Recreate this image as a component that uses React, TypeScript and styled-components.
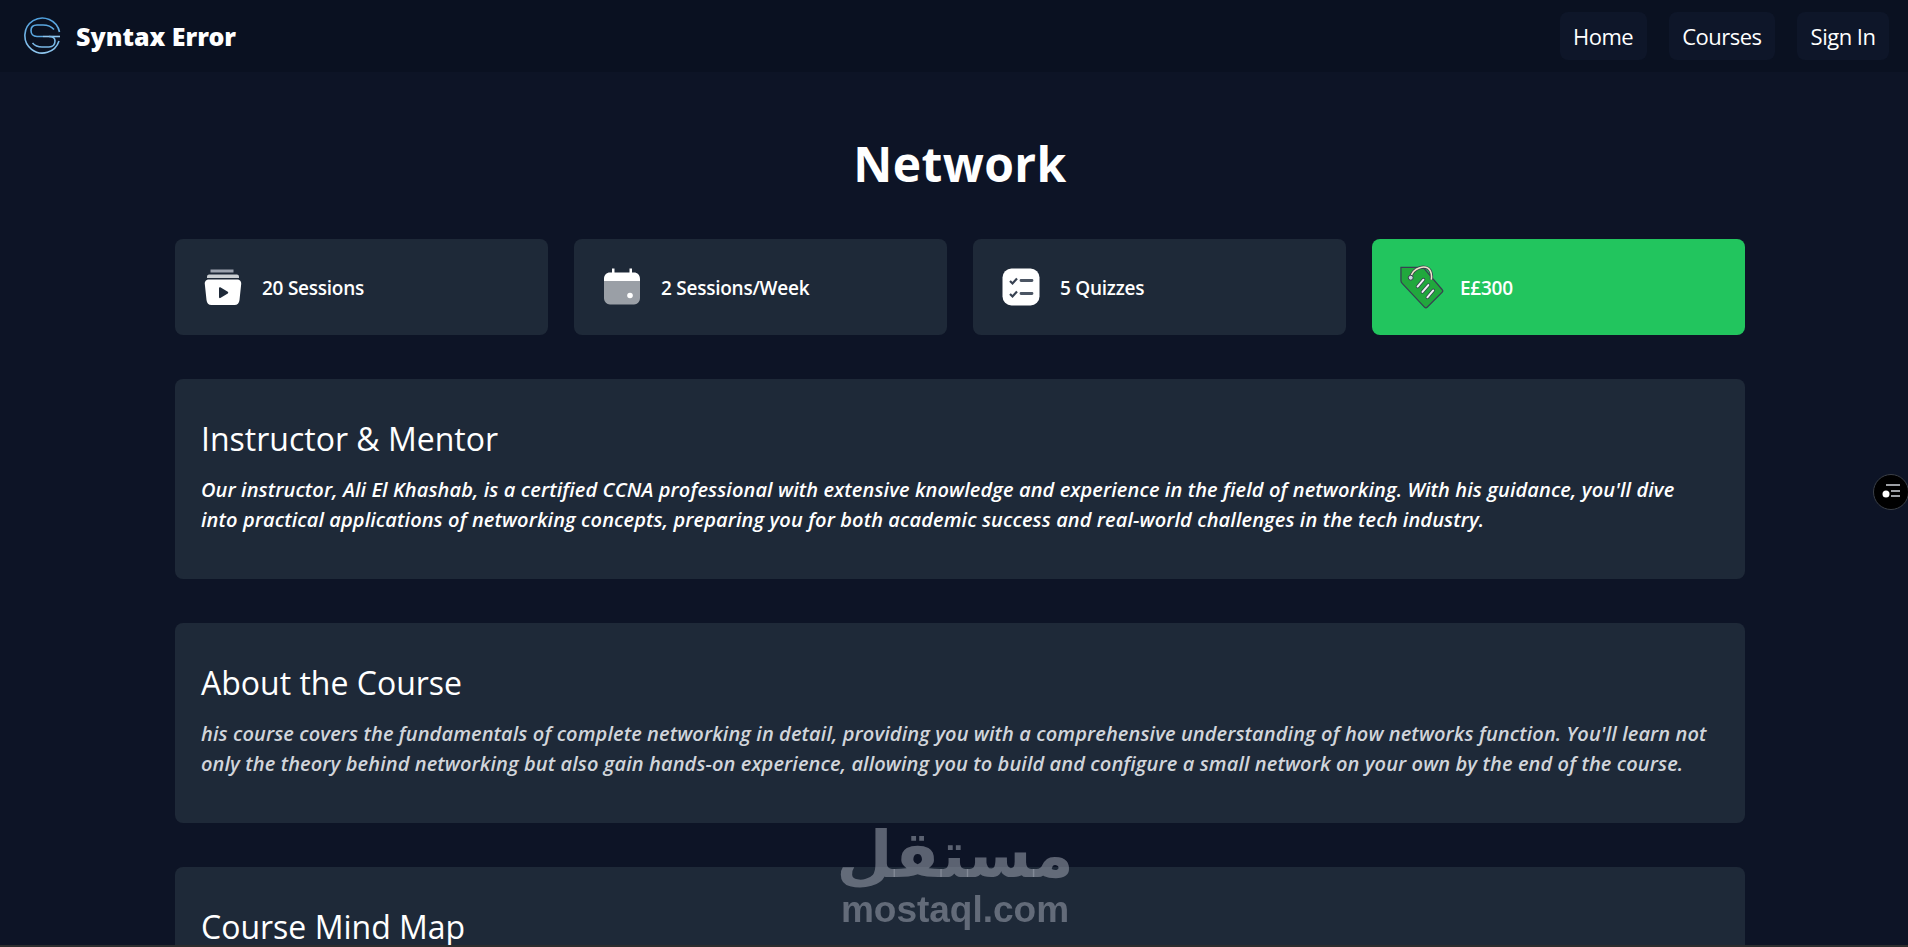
import React from 'react';
import styled, { createGlobalStyle } from 'styled-components';

const GlobalStyle = createGlobalStyle`
    html, body {
        margin: 0;
        height: 100%;
        overflow: hidden;
        background: #0d1426;
    }
    * { box-sizing: border-box; }
    body {
        font-family: "Open Sans", "Noto Sans", sans-serif;
        color: #fff;
    }
`;

const Navbar = styled.nav`
    height: 72px;
    padding: 0 19px 0 24px;
    display: flex;
    align-items: center;
    justify-content: space-between;
    background: #0a1121;
`;

const Brand = styled.div`
    display: flex;
    align-items: center;
    gap: 14px;
    font-size: 25px;
    font-weight: 900;
    font-family: "Noto Sans", sans-serif;
`;

const NavLinks = styled.div`
    display: flex;
    gap: 22px;
`;

const NavLink = styled.a`
    height: 48px;
    padding: 0 13.5px;
    display: flex;
    align-items: center;
    border-radius: 8px;
    background: #0e1629;
    font-size: 22px;
    font-weight: 500;
    letter-spacing: -0.5px;
`;

const Main = styled.main`
    margin: 0 163px 0 175px;
    padding-top: 56px;
`;

const Title = styled.h1`
    margin: 0 0 40px;
    font-size: 48px;
    line-height: 71px;
    font-weight: 700;
    text-align: center;
    letter-spacing: 0.4px;
`;

const Stats = styled.div`
    display: grid;
    grid-template-columns: repeat(4, 1fr);
    gap: 26px;
    margin-bottom: 44px;
`;

const Stat = styled.div<{ $accent?: boolean }>`
    height: 96px;
    padding: ${(p) => (p.$accent ? '0 27px' : '0 29px')};
    display: flex;
    align-items: center;
    gap: ${(p) => (p.$accent ? '16px' : '20px')};
    border-radius: 8px;
    background: ${(p) => (p.$accent ? '#22c55e' : '#1e2938')};
    font-size: 19px;
    font-weight: 600;
    letter-spacing: -0.25px;
`;

const StatLabel = styled.span`
    padding-top: 2px;
`;

const Section = styled.section`
    height: 200px;
    margin-bottom: 44px;
    padding: 39px 26px 0;
    border-radius: 8px;
    background: #1e2938;
`;

const Heading = styled.h2`
    margin: 0 0 15px;
    font-size: 32px;
    line-height: 42px;
    font-weight: 400;
`;

const Body = styled.p<{ $muted?: boolean }>`
    margin: 0;
    padding-right: 6px;
    font-size: 20px;
    line-height: 30px;
    font-weight: 600;
    font-style: italic;
    letter-spacing: 0.1px;
    color: ${(p) => (p.$muted ? '#d1d5db' : '#fff')};
`;

const SideWidget = styled.div`
    position: fixed;
    top: 474px;
    right: -1px;
    width: 36px;
    height: 36px;
    display: flex;
    align-items: center;
    justify-content: center;
    border-radius: 50%;
    border: 1px solid #3a3f47;
    background: #000;
`;

const Watermark = styled.div`
    position: fixed;
    left: 840px;
    top: 818px;
    width: 230px;
    display: flex;
    flex-direction: column;
    align-items: center;
    color: rgba(156, 163, 175, 0.55);
    font-family: "DejaVu Sans", sans-serif;
    font-weight: 700;
    pointer-events: none;
`;

const WatermarkArabic = styled.div`
    font-size: 65px;
    line-height: 73px;
`;

const WatermarkLatin = styled.div`
    font-family: "Liberation Sans", sans-serif;
    font-size: 37px;
    line-height: 38px;
`;

const BottomEdge = styled.div`
    position: fixed;
    left: 0;
    right: 0;
    bottom: 0;
    height: 2px;
    background: #2c2d2e;
`;

const Logo = () => (
    <svg width="38" height="38" viewBox="0 0 38 38" fill="none" strokeWidth="1.6">
        <defs>
            <linearGradient id="logoStroke" x1="0" y1="0" x2="0" y2="1">
                <stop offset="0" stopColor="#4f9fdc" />
                <stop offset="1" stopColor="#8fc6ee" />
            </linearGradient>
        </defs>
        <g stroke="url(#logoStroke)">
            <path d="M35 24A17.5 17.5 0 1 1 35.5 15" />
            <path d="M19 19.500H36" stroke="#8fc6ee" />
            <path d="M30 12.500C27 9 24 8 19 8H13C9 8 7 10.500 7 13.500S9 19.500 13 19.500H19" stroke="#5ba8e0" />
            <path d="M25 19.500C29 19.500 31 21 31 24S29 30 25 30H18C14 30 11 29 8.500 26" stroke="#7ab8e6" />
        </g>
    </svg>
);

const SessionsIcon = () => (
    <svg width="38" height="38" viewBox="0 0 38 38">
        <path d="M6.500 1.500H29.500V4.500H6.500Z" fill="#9ca3af" />
        <path d="M3 8.500C3 7 4.500 6.500 6 6.500H32C33.500 6.500 35 7 35 8.500V10H3Z" fill="#cbd0d4" />
        <path d="M5 11.500H33C35.800 11.500 37.500 13.500 37.200 16L35.500 32C35.200 35 33.500 37 30.500 37H7.500C4.500 37 2.800 35 2.500 32L0.800 16C0.500 13.500 2.200 11.500 5 11.500Z" fill="#fff" />
        <path d="M15 20C15 19.300 15.700 18.900 16.300 19.300L23.800 23.800C24.400 24.200 24.400 25.100 23.800 25.500L16.300 30C15.700 30.400 15 30 15 29.300Z" fill="#1e2938" />
    </svg>
);

const CalendarIcon = () => (
    <svg width="38" height="38" viewBox="0 0 38 38">
        <path d="M1 13H37V30C37 33.500 34.500 36.500 31 36.500H7C3.500 36.500 1 33.500 1 30Z" fill="#9a9fa6" />
        <path d="M9 0.500H11.500V4.500H26.500V0.500H29V4.500H31C34.500 4.500 37 7 37 11V13H1V11C1 7 3.500 4.500 7 4.500H9Z" fill="#fff" />
        <circle cx="27" cy="27.500" r="2.800" fill="#fff" />
    </svg>
);

const QuizIcon = () => (
    <svg width="38" height="38" viewBox="0 0 38 38" fill="none">
        <rect x="0.500" y="0.500" width="37" height="37" rx="9" fill="#fff" />
        <path d="M8 13L10.500 15.500L15 10.500M8 26L10.500 28.500L15 23.500" stroke="#374151" strokeWidth="2.200" />
        <path d="M19 12.500H30M19 25.500H30" stroke="#4b5563" strokeWidth="2.800" strokeLinecap="round" />
    </svg>
);

const TagIcon = () => (
    <svg width="45" height="45" viewBox="0 0 46 46" fill="none">
        <path d="M2 2.500H22C24 2.500 25 3 26 4L44 25C45 26 45 27 44 28L29 43C28 44 27 44 26 43L3.500 19C2.500 18 2 17 2 16Z" fill="#21a83d" stroke="#374151" strokeWidth="1.300" />
        <path d="M12 13C14 2 28 -1 32 6C33.500 9 33.500 12 33 15" stroke="#374151" strokeWidth="3.200" />
        <path d="M12 13C14 2 28 -1 32 6C33.500 9 33.500 12 33 15" stroke="#f0e6c8" strokeWidth="1.600" />
        <circle cx="12" cy="13" r="2.500" fill="#cbd5e1" stroke="#374151" />
        <path d="M19 22L25 15M24 27.500L30 20.500M29 33L35 26" stroke="#374151" strokeWidth="3.600" strokeLinecap="round" />
        <path d="M19 22L25 15M24 27.500L30 20.500M29 33L35 26" stroke="#f3f4f6" strokeWidth="2" strokeLinecap="round" />
    </svg>
);

const WidgetIcon = () => (
    <svg width="20" height="20" viewBox="0 0 20 20" fill="none">
        <path d="M5 3H19M10 9H19M10 14H19" stroke="#d1d5db" strokeWidth="1.400" />
        <circle cx="5" cy="12" r="3.500" fill="#fff" />
    </svg>
);

const App = () => (
    <>
        <GlobalStyle />
        <Navbar>
            <Brand>
                <Logo />
                Syntax Error
            </Brand>
            <NavLinks>
                <NavLink>Home</NavLink>
                <NavLink>Courses</NavLink>
                <NavLink>Sign In</NavLink>
            </NavLinks>
        </Navbar>
        <Main>
            <Title>Network</Title>
            <Stats>
                <Stat><SessionsIcon /><StatLabel>20 Sessions</StatLabel></Stat>
                <Stat><CalendarIcon /><StatLabel>2 Sessions/Week</StatLabel></Stat>
                <Stat><QuizIcon /><StatLabel>5 Quizzes</StatLabel></Stat>
                <Stat $accent><TagIcon /><StatLabel>E£300</StatLabel></Stat>
            </Stats>
            <Section>
                <Heading>Instructor &amp; Mentor</Heading>
                <Body>
                    Our instructor, Ali El Khashab, is a certified CCNA professional with extensive knowledge and experience in the field of networking. With his guidance, you'll dive into practical applications of networking concepts, preparing you for both academic success and real-world challenges in the tech industry.
                </Body>
            </Section>
            <Section>
                <Heading>About the Course</Heading>
                <Body $muted>
                    his course covers the fundamentals of complete networking in detail, providing you with a comprehensive understanding of how networks function. You'll learn not only the theory behind networking but also gain hands-on experience, allowing you to build and configure a small network on your own by the end of the course.
                </Body>
            </Section>
            <Section>
                <Heading>Course Mind Map</Heading>
            </Section>
        </Main>
        <SideWidget><WidgetIcon /></SideWidget>
        <Watermark>
            <WatermarkArabic>مستقل</WatermarkArabic>
            <WatermarkLatin>mostaql.com</WatermarkLatin>
        </Watermark>
        <BottomEdge />
    </>
);

export default App;
